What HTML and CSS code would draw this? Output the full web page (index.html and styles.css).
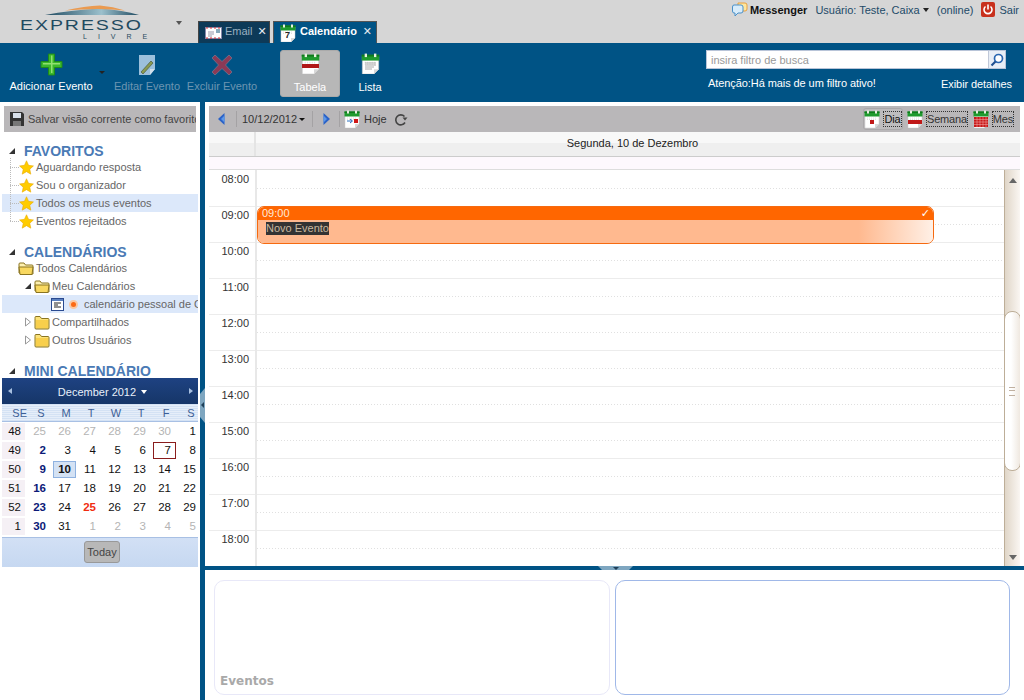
FILE: index.html
```html
<!DOCTYPE html>
<html lang="pt-BR">
<head>
  <meta charset="UTF-8" />
  <title>Expresso Livre - Calendário</title>
  <link rel="stylesheet" href="styles.css">
</head>
<body>
  <svg class="defs" width="0" height="0">
    <symbol id="cal" viewBox="0 0 16 18">
      <path d="M1 3h14v11l-4 4H1z" fill="#fff" stroke="#c8c8c8" stroke-width=".5"/>
      <path d="M15 14h-4v4z" fill="#d8d8d8"/>
      <rect x="0.5" y="1.500" width="15" height="5" fill="#1f9a2e"/>
      <rect x="0.5" y="1.500" width="15" height="1.500" fill="#0f7a1c"/>
      <rect x="3" y="0.5" width="2" height="3" fill="#e8f0e0"/>
      <rect x="11" y="0.5" width="2" height="3" fill="#e8f0e0"/>
      <path d="M3 8h10M3 9.500h10" stroke="#ccc" stroke-width=".6" stroke-dasharray="1 1"/>
    </symbol>
    <symbol id="star" viewBox="0 0 16 16">
      <path d="M8 .8l2.2 4.9 5.2.6-3.9 3.5 1.1 5.3L8 12.4l-4.6 2.7 1.1-5.3L.6 6.300l5.200-.6z" fill="#fc0" stroke="#e8a800" stroke-width=".6"/>
    </symbol>
    <symbol id="folder-closed" viewBox="0 0 16 15">
      <path d="M1 3.500V2.500q0-1 1-1h4l1.500 2H14q1 0 1 1V13q0 1-1 1H2q-1 0-1-1z" fill="#fbe27a" stroke="#8a7420"/>
      <path d="M2 5h12v8H2z" fill="#f8cf4c"/>
    </symbol>
    <symbol id="folder-open" viewBox="0 0 16 15">
      <path d="M1 12V3q0-1 1-1h4l1.500 2H14q1 0 1 1v8z" fill="#fdf0b0" stroke="#8a7420"/>
      <path d="M1 6h14l-1 7.500H2z" fill="#f8d860" stroke="#8a7420"/>
    </symbol>
    <symbol id="arrow-open" viewBox="0 0 8 8">
      <path d="M7 1v6H1z" fill="#333"/>
    </symbol>
    <symbol id="arrow-closed" viewBox="0 0 8 10">
      <path d="M1.500 1l5 4-5 4z" fill="#fff" stroke="#999"/>
    </symbol>
    <symbol id="nav-left" viewBox="0 0 7 12">
      <path d="M6.500 0v12L0 6z" fill="#2a62c8"/>
      <path d="M6.500 2.500v7L3 6z" fill="#5c98e8"/>
    </symbol>
    <symbol id="nav-right" viewBox="0 0 7 12">
      <path d="M.5 0v12L7 6z" fill="#2a62c8"/>
      <path d="M.5 2.500v7L4 6z" fill="#5c98e8"/>
    </symbol>
  </svg>

  <header class="topbar">
    <div class="logo">
      <svg class="logo-swoosh" width="96" height="11" viewBox="0 0 96 11">
        <defs>
          <linearGradient id="swoosh" x1="0" x2="1" y1="0" y2="0">
            <stop offset="0" stop-color="#1f4a60"/>
            <stop offset=".6" stop-color="#9cc0cc"/>
            <stop offset="1" stop-color="#1f4a60"/>
          </linearGradient>
        </defs>
        <path d="M0 10Q25 5 55 3.500Q78 5 94 10z" fill="url(#swoosh)"/>
        <path d="M20 5.500Q40 1 55 .5Q68 1.500 80 5.500Q55 2.500 20 5.500z" fill="#ea9a50"/>
      </svg>
      <span class="logo-name">EXPRESSO</span>
      <span class="logo-sub">LIVRE</span>
    </div>
    <span class="logo-caret"></span>
    <nav class="tabs">
      <div class="tab tab-dark">
        <svg class="tab-icon" width="17" height="12" viewBox="0 0 17 12">
          <rect x=".5" y=".5" width="16" height="11" fill="#fff" stroke="#88a"/>
          <path d="M1 1h15M1 11h15" stroke="#d33" stroke-width="1" stroke-dasharray="2 2"/>
          <rect x="11" y="2" width="4" height="4" fill="#8ab"/>
          <path d="M3 5h6M3 7h6M3 9h4" stroke="#99a"/>
        </svg>
        <span class="tab-label">Email</span><b class="tab-close">✕</b>
      </div>
      <div class="tab tab-active">
        <svg class="tab-icon" width="16" height="18"><use href="#cal"/></svg>
        <span class="tab-seven">7</span>
        <span class="tab-label">Calendário</span><b class="tab-close">✕</b>
      </div>
    </nav>
    <div class="session">
      <svg width="16" height="15" viewBox="0 0 16 15">
        <path d="M6 1h7q2 0 2 2v4q0 2-2 2H6z" fill="#fde6a0" stroke="#e8a040"/>
        <path d="M2 3h7q2 0 2 2v4q0 2-2 2H6l-3 3v-3H2q-1.500 0-1.500-2V5Q.5 3 2 3z" fill="#d8ecfa" stroke="#4a90c8"/>
      </svg>
      <b class="messenger">Messenger</b>
      <span class="user">Usuário: Teste, Caixa</span><i class="user-caret"></i>
      <span class="online">(online)</span>
      <svg class="power" width="14" height="15" viewBox="0 0 14 15">
        <rect width="14" height="15" rx="2" fill="#c8301c"/>
        <path d="M4.500 4.500a4 4 0 1 0 5 0" fill="none" stroke="#fff" stroke-width="1.600"/>
        <path d="M7 2.500v5" stroke="#fff" stroke-width="1.600"/>
      </svg>
      <span class="logout">Sair</span>
    </div>
  </header>

  <section class="actions">
    <div class="action action-add">
      <svg width="23" height="23" viewBox="0 0 23 23">
        <path d="M8.500 1h6v7.500H22v6h-7.500V22h-6v-7.500H1v-6h7.500z" fill="#3cb82c" stroke="#1f8a1a"/>
        <path d="M11 2.500h1.500V10H20v1.500h-7.500V20H11v-8.500H3V10h8z" fill="#8fe070"/>
      </svg>
      <span>Adicionar Evento</span>
    </div>
    <i class="action-caret"></i>
    <div class="action action-off action-edit">
      <svg width="17" height="20" viewBox="0 0 17 20">
        <path d="M0 0h16v14l-5 6H0z" fill="#9cc0dc"/>
        <path d="M16 14h-5v6z" fill="#d0e0ec"/>
        <path d="M2 17L12 6l2 2L4 19z" fill="#8a9a50" stroke="#4a5a40" stroke-width=".7"/>
      </svg>
      <span>Editar Evento</span>
    </div>
    <div class="action action-off action-del">
      <svg width="20" height="20" viewBox="0 0 20 20">
        <path d="M3 0l7 6.500L17 0l3 3-6.500 7 6.500 7-3 3-7-6.500L3 20l-3-3 6.500-7L0 3z" fill="#8c3a56" stroke="#7a7a90" stroke-width=".7"/>
      </svg>
      <span>Excluir Evento</span>
    </div>
    <div class="action action-view action-selected">
      <svg width="19" height="21"><use href="#cal"/><rect x="1" y="11" width="17" height="4" fill="#b01818"/></svg>
      <span>Tabela</span>
    </div>
    <div class="action action-view action-list">
      <svg width="19" height="21">
        <use href="#cal"/>
        <path d="M4 10h11M4 12h11M4 14h9M4 16h7" stroke="#aaa"/>
      </svg>
      <span>Lista</span>
    </div>
    <div class="filter">
      <div class="filter-box">
        <span class="filter-input">insira filtro de busca</span>
        <span class="filter-btn">
          <svg width="14" height="14" viewBox="0 0 14 14">
            <circle cx="8.500" cy="5.500" r="4" fill="#fff" stroke="#2a66b0" stroke-width="1.700"/>
            <path d="M5.500 8.500L1.500 12.500" stroke="#1f4f90" stroke-width="2.200"/>
          </svg>
        </span>
      </div>
      <div class="filter-notes">
        <span>Atenção:Há mais de um filtro ativo!</span>
        <span class="filter-details">Exibir detalhes</span>
      </div>
    </div>
  </section>

  <div class="workspace">
    <aside class="sidebar">
      <div class="save-bar">
        <svg width="14" height="14" viewBox="0 0 14 14">
          <path d="M0 0h12l2 2v12H0z" fill="#333"/>
          <rect x="3" y="1" width="8" height="5" fill="#d8e0ea"/>
          <rect x="3" y="9" width="8" height="5" fill="#777"/>
        </svg>
        <span>Salvar visão corrente como favorito</span>
      </div>

      <h2 class="tree-title"><svg width="8" height="8"><use href="#arrow-open"/></svg>FAVORITOS</h2>
      <ul class="tree fav-tree">
        <li class="tree-row"><svg width="15" height="15"><use href="#star"/></svg>Aguardando resposta</li>
        <li class="tree-row"><svg width="15" height="15"><use href="#star"/></svg>Sou o organizador</li>
        <li class="tree-row tree-row-on"><svg width="15" height="15"><use href="#star"/></svg>Todos os meus eventos</li>
        <li class="tree-row"><svg width="15" height="15"><use href="#star"/></svg>Eventos rejeitados</li>
      </ul>

      <h2 class="tree-title tree-title-cal"><svg width="8" height="8"><use href="#arrow-open"/></svg>CALENDÁRIOS</h2>
      <ul class="tree cal-tree">
        <li class="tree-row level-0"><svg width="16" height="15"><use href="#folder-open"/></svg>Todos Calendários</li>
        <li class="tree-row level-1"><svg class="twist" width="8" height="8"><use href="#arrow-open"/></svg><svg width="16" height="15"><use href="#folder-open"/></svg>Meu Calendários</li>
        <li class="tree-row tree-row-on level-2">
          <svg class="cal-type" width="13" height="13" viewBox="0 0 13 13">
            <rect x=".5" y=".5" width="12" height="12" fill="#fff" stroke="#2a4a90"/>
            <rect x="1" y="1" width="11" height="2" fill="#5a80c0"/>
            <path d="M3 5h7M3 7h4M3 9h7" stroke="#222"/>
          </svg>
          <span class="cal-dot"></span>
          <span class="cal-name">calendário pessoal de Caixa</span>
        </li>
        <li class="tree-row level-1"><svg class="twist" width="8" height="10"><use href="#arrow-closed"/></svg><svg width="16" height="15"><use href="#folder-closed"/></svg>Compartilhados</li>
        <li class="tree-row level-1"><svg class="twist" width="8" height="10"><use href="#arrow-closed"/></svg><svg width="16" height="15"><use href="#folder-closed"/></svg>Outros Usuários</li>
      </ul>

      <h2 class="tree-title tree-title-mini"><svg width="8" height="8"><use href="#arrow-open"/></svg>MINI CALENDÁRIO</h2>
      <div class="mini">
        <div class="mini-head">
          <span class="mini-nav mini-prev"></span>
          <span class="mini-month">December 2012 <i></i></span>
          <span class="mini-nav mini-next"></span>
        </div>
        <div class="mini-grid mini-days">
          <span>SE</span><span>S</span><span>M</span><span>T</span><span>W</span><span>T</span><span>F</span><span>S</span>
        </div>
        <div class="mini-grid mini-body">
          <span class="wk">48</span><span class="out">25</span><span class="out">26</span><span class="out">27</span><span class="out">28</span><span class="out">29</span><span class="out">30</span><span>1</span>
          <span class="wk">49</span><span class="sun">2</span><span>3</span><span>4</span><span>5</span><span>6</span><span class="today">7</span><span>8</span>
          <span class="wk">50</span><span class="sun">9</span><span class="picked">10</span><span>11</span><span>12</span><span>13</span><span>14</span><span>15</span>
          <span class="wk">51</span><span class="sun">16</span><span>17</span><span>18</span><span>19</span><span>20</span><span>21</span><span>22</span>
          <span class="wk">52</span><span class="sun">23</span><span>24</span><span class="holiday">25</span><span>26</span><span>27</span><span>28</span><span>29</span>
          <span class="wk">1</span><span class="sun">30</span><span>31</span><span class="out">1</span><span class="out">2</span><span class="out">3</span><span class="out">4</span><span class="out">5</span>
        </div>
        <div class="mini-foot"><span class="today-btn">Today</span></div>
      </div>
    </aside>

    <div class="splitter-v"><span class="handle-v"></span></div>

    <main class="main">
      <div class="cal-toolbar">
        <svg class="nav-btn" width="7" height="12"><use href="#nav-left"/></svg>
        <i class="sep"></i>
        <span class="date-pick">10/12/2012</span><i class="date-caret"></i>
        <i class="sep sep-b"></i>
        <svg class="nav-btn" width="7" height="12"><use href="#nav-right"/></svg>
        <i class="sep sep-c"></i>
        <svg class="hoje-icon" width="16" height="18">
          <use href="#cal"/>
          <path d="M3 11h5M6 9l2.500 2L6 13" stroke="#2a70c0" fill="none"/>
          <rect x="10" y="9" width="4" height="4" fill="#d01818"/>
        </svg>
        <span class="hoje">Hoje</span>
        <svg class="refresh" width="14" height="13" viewBox="0 0 14 13">
          <path d="M11 9.500A5 5 0 1 1 10.500 3.500" fill="none" stroke="#444" stroke-width="1.600"/>
          <path d="M8.500 4.500h5l-2.500 3z" fill="#444"/>
        </svg>
        <div class="view-modes">
          <div class="mode-item mode-on">
            <svg width="16" height="18"><use href="#cal"/><rect x="6" y="10" width="4" height="4" fill="#c01818"/></svg>
            <span class="mode">Dia</span>
          </div>
          <div class="mode-item">
            <svg width="16" height="18"><use href="#cal"/><rect x="1" y="10" width="14" height="4" fill="#c01818"/></svg>
            <span class="mode">Semana</span>
          </div>
          <div class="mode-item">
            <svg width="16" height="18"><use href="#cal"/><rect x="1" y="7" width="14" height="10" fill="#c81818"/><path d="M1 9.500h14M1 12h14M1 14.500h14M4 7v10M7 7v10M10 7v10M13 7v10" stroke="#f4b0b0" stroke-width=".5"/></svg>
            <span class="mode">Mes</span>
          </div>
        </div>
      </div>

      <div class="day-head">
        <span class="day-gutter"></span>
        <span class="day-name">Segunda, 10 de Dezembro</span>
      </div>
      <div class="day-allday"></div>

      <div class="day-scroll">
        <div class="hours">
          <div class="hour"><span>08:00</span></div>
          <div class="hour"><span>09:00</span></div>
          <div class="hour"><span>10:00</span></div>
          <div class="hour"><span>11:00</span></div>
          <div class="hour"><span>12:00</span></div>
          <div class="hour"><span>13:00</span></div>
          <div class="hour"><span>14:00</span></div>
          <div class="hour"><span>15:00</span></div>
          <div class="hour"><span>16:00</span></div>
          <div class="hour"><span>17:00</span></div>
          <div class="hour"><span>18:00</span></div>
          <div class="event">
            <div class="event-time">09:00<span class="event-check">✓</span></div>
            <div class="event-body"><span>Novo Evento</span></div>
          </div>
        </div>
        <div class="scrollbar">
          <span class="scroll-up"></span>
          <span class="scroll-thumb"></span>
          <span class="scroll-down"></span>
        </div>
      </div>

      <div class="splitter-h"><span class="handle-h"></span></div>

      <div class="panels">
        <div class="panel panel-events"><span>Eventos</span></div>
        <div class="panel panel-detail"></div>
      </div>
    </main>
  </div>
</body>
</html>
```

FILE: styles.css
```css
* { box-sizing: border-box; margin: 0; padding: 0; }
html, body { height: 100%; }
body {
  width: 1024px;
  height: 700px;
  overflow: hidden;
  background: white;
  color: #333;
  font-family: 'Liberation Sans', Arial, sans-serif;
  font-size: 11px;
  display: flex;
  flex-direction: column;
}
ul { list-style: none; }
i { font-style: normal; display: block; }
svg { display: block; flex: none; }
.defs { position: absolute; }

/* top bar */
.topbar {
  height: 43px;
  flex: none;
  background: #d6d6d6;
  position: relative;
  display: flex;
  align-items: flex-end;
}
.logo {
  width: 172px;
  height: 43px;
  padding: 5px 0 0 20px;
  color: #1f4a60;
  position: relative;
  flex: none;
}
.logo-swoosh { margin-left: 25px; }
.logo-name {
  display: block;
  font-size: 15px;
  line-height: 12px;
  margin-top: 3px;
  letter-spacing: 1.500px;
  transform-origin: left;
  transform: scaleX(1.3);
}
.logo-sub {
  display: block;
  font-size: 7px;
  line-height: 9px;
  margin: 1px 0 0 63px;
  letter-spacing: 11px;
  white-space: nowrap;
}
.logo-caret {
  position: absolute;
  left: 176px;
  top: 21px;
  border: 3px solid transparent;
  border-top: 4px solid #555;
}
.tabs {
  display: flex;
  gap: 3px;
  margin-left: 26px;
}
.tab {
  height: 22px;
  display: flex;
  align-items: center;
  position: relative;
  border: 1px solid #444;
  border-bottom: 0;
  padding-left: 6px;
}
.tab-icon { margin-right: 3px; }
.tab-label { margin-bottom: 3px; }
.tab-dark {
  width: 72px;
  background: #0d3a58;
  color: #9ab0c0;
}
.tab-active {
  width: 104px;
  background: #005385;
  color: #fff;
  font-weight: bold;
  border-color: #555;
}
.tab-active .tab-icon { margin-right: 4px; }
.tab-seven {
  position: absolute;
  left: 11px;
  top: 8px;
  color: #222;
  font-size: 9px;
  font-weight: bold;
}
.tab-close {
  margin: 0 0 3px 5px;
  color: #e4eaf0;
  font-size: 11px;
  font-family: 'DejaVu Sans', sans-serif;
}
.tab-active .tab-close { margin-left: 6px; }
.session {
  position: absolute;
  right: 5px;
  top: 2px;
  display: flex;
  align-items: center;
  height: 15px;
  color: #1d4a68;
}
.messenger { margin: 0 8px 0 2px; color: #111; }
.user-caret {
  margin: 1px 8px 0 3px;
  border: 3px solid transparent;
  border-top: 4px solid #222;
  border-bottom: 0;
}
.power { margin: 0 4px 0 8px; }

/* actions bar */
.actions {
  height: 59px;
  flex: none;
  background: #005385;
  color: #fff;
  display: flex;
  position: relative;
}
.action {
  height: 47px;
  margin-top: 7px;
  display: flex;
  flex-direction: column;
  align-items: center;
  justify-content: space-between;
  padding: 3px 0 5px;
  white-space: nowrap;
  font-size: 11px;
}
.action-add { width: 82px; margin-left: 10px; }
.action-caret {
  align-self: flex-start;
  margin: 28px 0 0 7px;
  border: 3px solid transparent;
  border-top: 3px solid #222;
  border-bottom: 0;
}
.action-off { color: #6d95b1; padding-top: 5px; }
.action-edit { width: 66px; margin-left: 9px; }
.action-del { width: 70px; margin-left: 7px; }
.action-view { width: 60px; border-radius: 3px; padding: 3px 0 4px; }
.action-selected {
  margin-left: 23px;
  background: #b7b7b7;
  border: 1px solid #aaa;
  padding: 2px 0 3px;
}
.action-list { width: 40px; margin-left: 10px; }
.filter { width: 306px; margin: 7px 0 0 316px; }
.filter-box {
  width: 300px;
  height: 19px;
  background: white;
  border: 1px solid #b8c4d8;
  display: flex;
  justify-content: space-between;
}
.filter-input { color: #999; padding: 3px 4px; }
.filter-btn {
  width: 17px;
  background: #e8eef6;
  border-left: 1px solid #c0c8d8;
  display: flex;
  align-items: center;
  justify-content: center;
}
.filter-notes {
  display: flex;
  justify-content: space-between;
  margin-top: 8px;
  padding-left: 2px;
  letter-spacing: -.08px;
}
.filter-details { margin-top: 1px; }

/* layout */
.workspace { flex: 1; display: flex; min-height: 0; }
.sidebar { width: 200px; flex: none; overflow: hidden; }
.splitter-v { width: 5px; flex: none; background: #005385; position: relative; }
.handle-v {
  position: absolute;
  left: 0;
  top: 286px;
  width: 5px;
  height: 35px;
  background: #7ea6c0;
  clip-path: polygon(0 6px, 100% 0, 100% 100%, 0 calc(100% - 6px));
}
.handle-v::after {
  content: "";
  position: absolute;
  left: 1px;
  top: 14px;
  border: 3px solid transparent;
  border-right: 3px solid #1f3f58;
  border-left: 0;
}
.main { flex: 1; min-width: 0; display: flex; flex-direction: column; padding-top: 4px; }

/* sidebar */
.save-bar {
  height: 26px;
  margin: 4px 4px 0;
  background: #b9b7b9;
  display: flex;
  align-items: center;
  gap: 4px;
  padding-left: 6px;
  color: #444;
  white-space: nowrap;
  overflow: hidden;
}
.tree-title {
  display: flex;
  align-items: center;
  color: #4a7ab5;
  font-size: 14px;
  line-height: 16px;
  font-weight: bold;
  padding-left: 8px;
  margin-top: 11px;
}
.tree-title svg { margin-right: 8px; }
.tree { color: #666; margin: -1px 2px 0 2px; }
.tree-row {
  height: 18px;
  display: flex;
  align-items: center;
  white-space: nowrap;
  overflow: hidden;
}
.tree-row-on { background-color: #dce8fa; }
.fav-tree { position: relative; }
.fav-tree .tree-row {
  padding-left: 17px;
  background-image: repeating-linear-gradient(90deg, #bbb 0 1px, transparent 1px 2px);
  background-position: 8px 9px;
  background-size: 10px 1px;
  background-repeat: no-repeat;
}
.fav-tree .tree-row svg { margin-right: 2px; }
.fav-tree::before {
  content: "";
  position: absolute;
  left: 8px;
  top: 0;
  height: 63px;
  border-left: 1px dotted #bbb;
}
.tree-title-cal { margin-top: 14px; }
.level-0 { padding-left: 16px; }
.level-1 { padding-left: 22px; }
.level-0 svg, .level-1 svg { margin-right: 2px; }
.twist { margin-right: 2px; }
.level-2 { padding-left: 49px; }
.cal-dot {
  width: 9px;
  height: 9px;
  flex: none;
  margin: 0 6px 0 5px;
  border-radius: 50%;
  background: #fb6a14;
  border: 2px solid #fbc8a0;
}
.tree-title-mini { margin-top: 14px; height: 15px; }

/* mini calendar */
.mini { margin: 0 2px; width: 196px; overflow: hidden; }
.mini-head {
  height: 26px;
  background: linear-gradient(#1e4282, #163668);
  color: #e8f0fa;
  display: flex;
  align-items: center;
  justify-content: space-between;
  padding: 0 5px 0 6px;
}
.mini-nav { width: 0; height: 0; border: 3.500px solid transparent; box-sizing: content-box; }
.mini-prev { border-right: 4px solid #a8c0e0; border-left: 0; }
.mini-next { border-left: 4px solid #a8c0e0; border-right: 0; }
.mini-month { margin-left: 4px; padding-top: 2px; }
.mini-month i {
  display: inline-block;
  vertical-align: 2px;
  margin-left: 2px;
  border: 3px solid transparent;
  border-top: 4px solid #fff;
  border-bottom: 0;
}
.mini-grid {
  width: 200px;
  display: grid;
  grid-template-columns: repeat(8, 25px);
}
.mini-days {
  height: 18px;
  background: repeating-linear-gradient(#d4e2f4 0 1px, #e6eef9 1px 2px);
  border-bottom: 1px solid #a8c0e4;
  color: #3d5f96;
  line-height: 18px;
}
.mini-days span { text-align: center; padding-left: 3px; }
.mini-days span:first-child { text-align: right; padding-left: 0; }
.mini-body { grid-auto-rows: 19px; color: #111; }
.mini-body span {
  text-align: right;
  padding-right: 5px;
  line-height: 17px;
  margin: 1px;
  font-size: 11.500px;
}
.mini-body .wk { background: #f5f0f5; padding-right: 4px; margin: 1px 2px 1px 0; }
.mini-body .out { color: #b4b4b4; }
.mini-body .sun { color: #0c1a78; font-weight: bold; }
.mini-body .holiday { color: #f02c10; font-weight: bold; }
.mini-body .today { border: 1px solid #8a1c1c; padding-right: 4px; line-height: 15px; }
.mini-body .picked {
  background: #d4e2f4;
  border: 1px solid #8fb2e0;
  color: #111;
  font-weight: bold;
  padding-right: 4px;
  line-height: 15px;
}
.mini-foot {
  height: 30px;
  margin-top: 1px;
  background: linear-gradient(#d2e0f5, #c6d8f1);
  border-top: 1px solid #a8c0e4;
  display: flex;
  justify-content: center;
  padding: 3px 0 0 4px;
}
.today-btn {
  width: 36px;
  height: 22px;
  background: #b8b8b8;
  border: 1px solid #999;
  border-radius: 3px;
  text-align: center;
  line-height: 20px;
  color: #444;
}

/* calendar toolbar */
.cal-toolbar {
  height: 26px;
  margin: 0 4px;
  background: #b9b7b9;
  display: flex;
  align-items: center;
  padding-left: 9px;
}
.sep { width: 1px; height: 16px; background: #a4a2a4; margin: 0 5px 0 11px; }
.sep-b { margin: 0 10px 0 7px; }
.sep-c { margin: 0 4px 0 9px; }
.date-caret {
  margin: 1px 0 0 2px;
  border: 3px solid transparent;
  border-top: 3px solid #111;
  border-bottom: 0;
}
.hoje { margin-left: 4px; }
.refresh { margin-left: 7px; }
.view-modes {
  margin-left: auto;
  margin-right: 5px;
  display: flex;
  align-items: center;
  gap: 3px;
}
.mode-item {
  display: flex;
  align-items: center;
  gap: 3px;
  height: 22px;
  border: 1px solid transparent;
  border-radius: 3px;
}
.mode-on { background: #bebcbe; border-color: #aaa8aa; }
.mode {
  border: 1px dotted #333;
  min-width: 19px;
  text-align: center;
  height: 16px;
  line-height: 15px;
  letter-spacing: -.2px;
}
.mode-on .mode { color: #111; }

/* day view */
.day-head {
  height: 25px;
  margin: 0 4px;
  display: flex;
  background: linear-gradient(#f8f8f8 0 11px, #efefef 11px);
  border-bottom: 1px solid #ccc;
}
.day-gutter { width: 47px; border-right: 2px solid #e4e4e4; }
.day-name { flex: 1; text-align: center; padding: 5px 11px 0 0; color: #222; }
.day-allday {
  height: 13px;
  margin: 0 4px;
  background: #fdf8fd;
  border-bottom: 1px solid #ddd;
}
.day-scroll {
  height: 396px;
  margin: 0 4px;
  display: flex;
  overflow: hidden;
}
.hours { flex: 1; position: relative; overflow: hidden; }
.hours::before {
  content: "";
  position: absolute;
  left: 46px;
  top: 0;
  bottom: 0;
  width: 2px;
  background: #e8e8e8;
}
.hour {
  height: 36px;
  background: repeating-linear-gradient(90deg, #e0e0e0 0 1px, transparent 1px 3px) 48px 17px / 100% 1px no-repeat;
  border-top: 1px solid #ececec;
}
.hour:first-child { border-top-color: transparent; }
.hour span {
  display: block;
  width: 40px;
  text-align: right;
  padding-top: 2px;
  color: #333;
}
.event {
  position: absolute;
  left: 48px;
  top: 36px;
  width: 677px;
  height: 38px;
  border: 1px solid #f66a10;
  border-radius: 7px;
  overflow: hidden;
}
.event-time {
  height: 13px;
  background: #ff6600;
  color: #ffe8d8;
  padding-left: 4px;
  line-height: 13px;
  position: relative;
}
.event-check {
  position: absolute;
  right: 3px;
  top: 0;
  color: white;
  font-weight: bold;
  font-family: 'DejaVu Sans', sans-serif;
  font-size: 11px;
}
.event-body {
  height: 24px;
  background: linear-gradient(90deg, #ffb98f 89%, #fff0e6);
  padding: 2px 0 0 8px;
}
.event-body span {
  background: #333;
  color: #c9b8a0;
  display: inline-block;
  line-height: 13px;
}
.scrollbar {
  width: 16px;
  flex: none;
  position: relative;
  background: linear-gradient(90deg, #e0d6c8, #faf6f2);
  border-left: 1px solid #bdae98;
}
.scroll-up, .scroll-down {
  position: absolute;
  left: 4px;
  border: 4px solid transparent;
}
.scroll-up { top: 8px; border-bottom: 5px solid #666; border-top: 0; }
.scroll-down { bottom: 6px; border-top: 5px solid #666; border-bottom: 0; }
.scroll-thumb {
  position: absolute;
  left: -1px;
  top: 141px;
  width: 17px;
  height: 160px;
  background: linear-gradient(90deg, #fff 40%, #efe8e0);
  border: 1px solid #bdae98;
  border-radius: 8px;
}
.scroll-thumb::after {
  content: "";
  position: absolute;
  left: 4px;
  top: 75px;
  width: 6px;
  height: 7px;
  border-top: 1px solid #c0b0a0;
  border-bottom: 1px solid #c0b0a0;
  background: linear-gradient(#c0b0a0, #c0b0a0) 0 2px / 100% 1px no-repeat;
}
.splitter-h {
  height: 4px;
  flex: none;
  margin-left: -5px;
  background: #005385;
  position: relative;
}
.handle-h {
  position: absolute;
  left: 398px;
  top: 0;
  width: 35px;
  height: 4px;
  background: #7ea6c0;
  clip-path: polygon(0 0, 100% 0, calc(100% - 4px) 100%, 4px 100%);
}
.handle-h::after {
  content: "";
  position: absolute;
  left: 15px;
  top: 1px;
  border: 3px solid transparent;
  border-top: 3px solid #1f3f58;
  border-bottom: 0;
}
.panels {
  display: flex;
  gap: 5px;
  margin: 10px 0 0 9px;
}
.panel { width: 396px; height: 115px; border-radius: 10px; }
.panel-events {
  border: 1px solid #e8e8f8;
  display: flex;
  align-items: flex-end;
  padding: 0 0 6px 5px;
  color: #a9a9a9;
  font-family: 'DejaVu Sans', sans-serif;
  font-weight: bold;
  font-size: 12px;
}
.panel-detail { width: 395px; border: 1px solid #a0b8e8; }
```
